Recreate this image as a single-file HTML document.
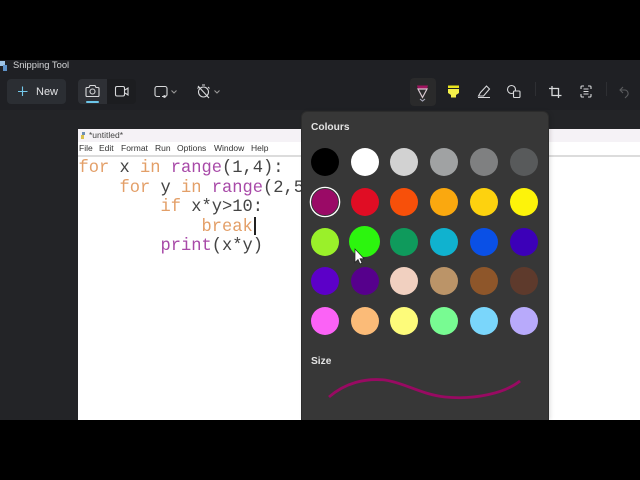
<!DOCTYPE html>
<html><head><meta charset="utf-8"><style>
html,body{margin:0;padding:0;background:#000}
#r{position:relative;width:640px;height:480px;overflow:hidden;background:#000;font-family:"Liberation Sans",sans-serif;filter:blur(.35px)}
.a{position:absolute}
.t{position:absolute;white-space:nowrap;line-height:1}
.c{position:absolute;width:28px;height:28px;border-radius:50%}
pre{position:absolute;margin:0;font:17.08px/19.5px "Liberation Mono",monospace;color:#444}
.o{color:#e39f68}.p{color:#a84aa8}
.m{position:absolute;top:144px;font-size:8.5px;color:#333;line-height:1}
svg{position:absolute;overflow:visible}
</style></head><body><div id="r">
<div class="a" style="left:0;top:60px;width:640px;height:50px;background:#1f2024"></div>
<div class="a" style="left:0;top:110px;width:640px;height:310px;background:#232427"></div>
<div class="a" style="left:7px;top:79px;width:59px;height:25px;border-radius:4px;background:#2b2e33"></div>
<div class="a" style="left:78px;top:79px;width:29px;height:25px;border-radius:4px 0 0 4px;background:#2e3035"></div>
<div class="a" style="left:107px;top:79px;width:29px;height:25px;border-radius:0 4px 4px 0;background:#1c1d20"></div>
<div class="a" style="left:86px;top:101px;width:13px;height:2px;border-radius:1px;background:#6cc6ea"></div>
<div class="a" style="left:410px;top:78px;width:26px;height:28px;border-radius:4px;background:#2a2a2b"></div>
<div class="t" style="left:13px;top:60px;font-size:9.4px;color:#d5d6d8">Snipping Tool</div>
<svg style="left:0;top:60px" width="10" height="12"><rect x="0" y="1" width="5" height="5" fill="#9fc4e6"/><rect x="3" y="5" width="4" height="6" fill="#5f92c8"/></svg>
<div class="t" style="left:36px;top:86px;font-size:11px;color:#e2e3e5;padding-top:0.500px">New</div>
<svg style="left:0;top:60px" width="640" height="50" fill="none" stroke="#d8d9db" stroke-width="1.100">
<path d="M18 31.500H27.500M22.500 26.500V36" stroke="#74c8ea"/>
<path d="M87 27.500h2l1-2h5l1 2h2a1 1 0 0 1 1 1v7a1 1 0 0 1-1 1h-11a1 1 0 0 1-1-1v-7a1 1 0 0 1 1-1z"/><circle cx="92.500" cy="31.500" r="2.500"/>
<rect x="115.500" y="26.500" width="9" height="9.500" rx="1.500"/><path d="M125 30l3-2v7l-3-2"/>
<path d="M160 36.500h-3a2 2 0 0 1-2-2v-6a2 2 0 0 1 2-2h8a2 2 0 0 1 2 2v6a2 2 0 0 1-2 2h-3" /><circle cx="164.500" cy="36.500" r=".8" fill="#d8d9db"/>
<path d="M171.500 30.500l2.500 2.500 2.500-2.500" stroke="#999"/>
<circle cx="203.500" cy="32" r="5"/><path d="M198 26l11 12M202 25h3M199 27l-1.500 1.500M208 27l1.500 1.500"/>
<path d="M214.500 30.500l2.500 2.500 2.500-2.500" stroke="#999"/>
<path d="M478.500 36l2-3.500 6-6.500 3 3-6 7zM478 37.500h12"/>
<circle cx="511.500" cy="29.500" r="4"/><rect x="513.500" y="31" width="6.500" height="6.500" rx="1" fill="#1f2024"/>
<path d="M552 26v9.500h9.500M549 28.500h9.500V38" stroke-width="1.300"/>
<path d="M581 29v-2a1 1 0 0 1 1-1h2M588 26h2a1 1 0 0 1 1 1v2M591 34v2a1 1 0 0 1-1 1h-2M584 37h-2a1 1 0 0 1-1-1v-2M583.500 29h5M583.500 31.500h5M583.500 34h5"/>
<path d="M623 27l-3 3 3 3M620 30h5a3.500 3.500 0 0 1 2 6l-2 2" stroke="#5a5b5e"/>
<path d="M535.500 22v14M606.500 22v14" stroke="#2e2f33"/>
</svg>
<svg style="left:0;top:60px" width="640" height="50">
<path d="M417 25.500h11l-1 3.500h-9z" fill="#a0145f"/><path d="M418 29h9l-4.500 8.500z" fill="none" stroke="#d8c8d0" stroke-width="1.200"/>
<path d="M420 39l2.500 2 2.500-2" fill="none" stroke="#aab" stroke-width="1.100"/>
<path d="M448 25.500h11v2.500h-11z" fill="#e8e41e"/><path d="M448 29h11v4l-3 2v2.500h-5v-2.500l-3-2z" fill="#f4f04a"/>
</svg>

<div class="a" style="left:78px;top:129px;width:562px;height:291px;background:#fff"></div>
<div class="a" style="left:78px;top:129px;width:562px;height:13px;background:#f5f2f6"></div>
<div class="a" style="left:78px;top:155px;width:562px;height:2px;background:#dcdcdc"></div>
<svg style="left:79px;top:131px" width="8" height="9"><path d="M3 1h3v3H3z" fill="#6d8fb5"/><path d="M2 4h3v4H2z" fill="#d9c04e"/></svg>
<div class="t" style="left:89px;top:131px;font-size:8.500px;color:#444">*untitled*</div>
<div class="m" style="left:79px">File</div><div class="m" style="left:99px">Edit</div><div class="m" style="left:121px">Format</div><div class="m" style="left:155px">Run</div><div class="m" style="left:177px">Options</div><div class="m" style="left:214px">Window</div><div class="m" style="left:251px">Help</div>
<pre style="left:78.500px;top:159px"><span class="o">for</span> x <span class="o">in</span> <span class="p">range</span>(1,4):
    <span class="o">for</span> y <span class="o">in</span> <span class="p">range</span>(2,5
        <span class="o">if</span> x*y&gt;10:
            <span class="o">break</span>
        <span class="p">print</span>(x*y)</pre>
<div class="a" style="left:254px;top:217px;width:1.500px;height:18px;background:#222"></div>

<div class="a" style="left:302px;top:112px;width:246px;height:308px;background:#373737;border-radius:5px 5px 0 0;box-shadow:0 0 0 1px #2c2c2c,2px 0 5px rgba(0,0,0,.15)"></div>
<div class="t" style="left:311px;top:122px;font-size:10.200px;font-weight:bold;color:#e4e4e4;padding-top:.5px">Colours</div>
<div class="t" style="left:311px;top:356px;font-size:10.200px;font-weight:bold;color:#e4e4e4;padding-top:.5px">Size</div>

<div class="c" style="left:311px;top:148px;background:#000"></div>
<div class="c" style="left:351px;top:148px;background:#fff"></div>
<div class="c" style="left:390px;top:148px;background:#d2d2d2"></div>
<div class="c" style="left:430px;top:148px;background:#a0a2a3"></div>
<div class="c" style="left:470px;top:148px;background:#7f8081"></div>
<div class="c" style="left:510px;top:148px;background:#585a5b"></div>

<div class="c" style="left:311px;top:188px;width:26px;height:26px;background:#9a0a66;border:1px solid #373737;box-shadow:0 0 0 1.300px #fff"></div>
<div class="c" style="left:351px;top:188px;background:#e00d24"></div>
<div class="c" style="left:390px;top:188px;background:#f7500a"></div>
<div class="c" style="left:430px;top:188px;background:#faa80f"></div>
<div class="c" style="left:470px;top:188px;background:#fdd20f"></div>
<div class="c" style="left:510px;top:188px;background:#fdf30a"></div>

<div class="c" style="left:311px;top:228px;background:#9af02a"></div>
<div class="c" style="left:349px;top:226px;width:31px;height:31px;background:#2cf50e"></div>
<div class="c" style="left:390px;top:228px;background:#0f9a5c"></div>
<div class="c" style="left:430px;top:228px;background:#10b2cf"></div>
<div class="c" style="left:470px;top:228px;background:#0a50e6"></div>
<div class="c" style="left:510px;top:228px;background:#3c00b8"></div>

<div class="c" style="left:311px;top:267px;background:#5c00c8"></div>
<div class="c" style="left:351px;top:267px;background:#56008c"></div>
<div class="c" style="left:390px;top:267px;background:#f1d0c0"></div>
<div class="c" style="left:430px;top:267px;background:#bb9468"></div>
<div class="c" style="left:470px;top:267px;background:#8e562a"></div>
<div class="c" style="left:510px;top:267px;background:#5e3a2c"></div>

<div class="c" style="left:311px;top:307px;background:#fb62f6"></div>
<div class="c" style="left:351px;top:307px;background:#fbbb78"></div>
<div class="c" style="left:390px;top:307px;background:#fdfb7a"></div>
<div class="c" style="left:430px;top:307px;background:#78fb92"></div>
<div class="c" style="left:470px;top:307px;background:#7ad6fb"></div>
<div class="c" style="left:510px;top:307px;background:#b8aafb"></div>

<svg style="left:0;top:0" width="640" height="480" fill="none">
<path d="M329 397C345 383 365 378 385 380C405 383 420 394 445 397C475 400 505 393 520 381" stroke="#980a62" stroke-width="2.800"/>
<path d="M355 249v13.500l3-3 2 4.500 2-1-2-4.300h4z" fill="#fff" stroke="#222" stroke-width=".7"/>
</svg>
</div>
<div style="position:fixed;left:0;top:420px;width:640px;height:60px;background:#000"></div>
</body></html>
